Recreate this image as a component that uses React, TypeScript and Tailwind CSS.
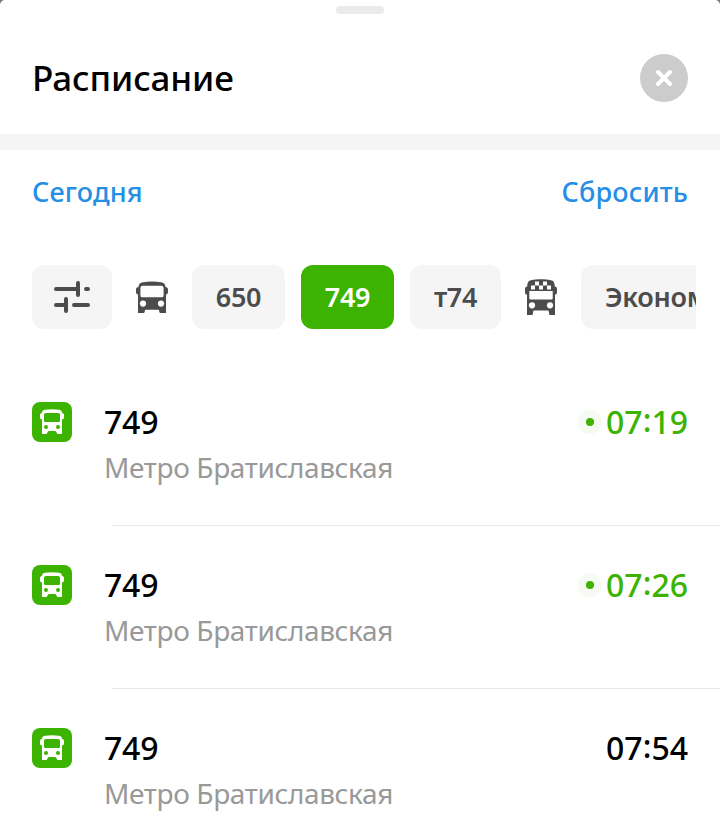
import React from "react";

function BusIcon() {
  return (
    <svg className="h-[33px] w-8 shrink-0" viewBox="0 0 32 33" fill="#4c4c4c">
      <path fillRule="evenodd" d="M2.5 6C2.7 3 4 1.7 7 1.2C13 .1 19 .1 25 1.2C28 1.7 29.3 3 29.5 6C31 6 32 7 32 8.5V11C32 12.5 31.2 13.2 30 13.5V32H23.8L22.8 28.7H9.2L8.2 32H2V13.5C.8 13.2 0 12.5 0 11V8.5C0 7 1 6 2.5 6ZM7 4.8C5.5 4.8 4.5 5.6 4.4 7V14.5C4.4 15.7 5.2 16.3 6.3 16.3H25.7C26.8 16.3 27.6 15.7 27.6 14.5V7C27.5 5.6 26.5 4.8 25 4.8Z" />
      <circle cx="7" cy="22.6" r="3.1" fill="#fff" />
      <circle cx="25" cy="22.6" r="3.1" fill="#fff" />
    </svg>
  );
}

function ExpressBusIcon() {
  return (
    <svg className="h-9 w-8 shrink-0" viewBox="0 0 32 36" fill="#4c4c4c">
      <path fillRule="evenodd" d="M2.2 7.5C2.4 3 3.5 1.8 6 1.2C12 0 20 0 26 1.2C28.5 1.8 29.6 3 29.8 7.5C31.2 7.8 32 8.6 32 10V13.2C32 14.6 31.2 15.4 30 15.6V36H24.5L23.5 31.5H8.5L7.5 36H2V15.6C.8 15.4 0 14.6 0 13.2V10C0 8.6 .8 7.8 2.2 7.5ZM4.3 12V19C4.3 20 4.8 20.5 5.8 20.5H26.2C27.2 20.5 27.7 20 27.7 19V12Z" />
      <path fill="#fff" d="M10 2.5h4v4h-4zM18 2.5h4v4h-4zM6 6.5h4v4H6zM14 6.5h4v4h-4zM22 6.5h4v4h-4z" />
      <circle cx="7" cy="26.3" r="3.1" fill="#fff" />
      <circle cx="25" cy="26.3" r="3.1" fill="#fff" />
    </svg>
  );
}

function FilterIcon() {
  return (
    <svg className="h-8 w-9" viewBox="0 0 36 32" fill="none" stroke="#4c4c4c" strokeWidth="4" strokeLinecap="round">
      <path d="M2 8H23M24 2V14M32 8H34M2 24H11M12 18V30M20 24H34" />
    </svg>
  );
}

function RouteBadge() {
  return (
    <div className="mt-px flex size-10 shrink-0 items-center justify-center rounded-lg bg-[#3bb300]">
      <svg className="-mt-px h-[25px] w-6" viewBox="0 0 24 25" fill="#fff">
        <path fillRule="evenodd" d="M1.8 4C2.2 1.7 3.3 1 5 .7C10 0 14 0 19 .7C20.7 1 21.8 1.7 22.2 4C23.4 4.3 24 5 24 6V8.5C24 9.5 23.3 10.3 22 10.5V25H17.5L15.5 22H8.5L6.5 25H2V10.5C.7 10.3 0 9.5 0 8.5V6C0 5 .6 4.3 1.8 4ZM6 4C4.800 4 4 4.800 4 6V11.500C4 12.500 4.500 13 5.500 13H18.500C19.500 13 20 12.500 20 11.500V6C20 4.800 19.200 4 18 4Z" />
        <circle cx="6" cy="18" r="2" fill="#3bb300" />
        <circle cx="18" cy="18" r="2" fill="#3bb300" />
      </svg>
    </div>
  );
}

function Departure({ time, live }: { time: string; live?: boolean }) {
  const [hours, minutes] = time.split(":");
  return (
    <div className="mt-px flex h-10 items-center">
      {live && (
        <span className="mr-1 flex size-6 items-center justify-center rounded-full bg-[#f5fbf2]">
          <span className="size-2 rounded-full bg-[#3bb300]" />
        </span>
      )}
      <span className={live ? "text-[32px] leading-10 font-medium text-[#3bb300]" : "text-[32px] leading-10 font-medium text-black"}>
        {hours}
        <span className="relative -top-[2px]">:</span>
        {minutes}
      </span>
    </div>
  );
}

function RouteRow({ time, live, last }: { time: string; live?: boolean; last?: boolean }) {
  return (
    <div className="h-[163px] shrink-0">
      <div className="flex h-[162px] px-8 pt-[38px]">
        <RouteBadge />
        <div className="ml-8 flex-1 pt-px">
          <div className="text-[32px] leading-10 font-medium tracking-[-0.2px]">749</div>
          <div className="mt-[5px] text-[28px] leading-10 tracking-[-0.36px] whitespace-nowrap text-[#999]">Метро Братиславская</div>
        </div>
        <Departure time={time} live={live} />
      </div>
      {!last && <div className="ml-28 h-px bg-[#e8e8e8]" />}
    </div>
  );
}

const chip = "flex h-16 shrink-0 items-center justify-center rounded-xl text-[27px] font-semibold tracking-[-0.3px] whitespace-nowrap";

export default function App() {
  return (
    <div className="h-[822px] w-[720px] overflow-hidden bg-[#777] font-['Noto_Sans',sans-serif] text-black">
      <div className="flex h-full flex-col rounded-t-[5px] bg-white">
        <div className="flex h-[54px] shrink-0 justify-center pt-1.5">
          <div className="h-2 w-12 rounded-full bg-[#ebebeb]" />
        </div>
        <header className="flex h-20 shrink-0 items-start justify-between px-8">
          <h1 className="text-[35px] leading-12 font-medium tracking-[-0.15px]">Расписание</h1>
          <button className="flex size-12 items-center justify-center rounded-full bg-[#ccc]">
            <svg className="size-4" viewBox="0 0 16 16" fill="none" stroke="#fff" strokeWidth="4" strokeLinecap="round">
              <path d="M2 2L14 14M14 2L2 14" />
            </svg>
          </button>
        </header>
        <div className="h-4 shrink-0 bg-[#f5f5f5]" />
        <div className="flex h-[115px] shrink-0 justify-between px-8 pt-[22px] text-[27px] leading-10 font-medium tracking-[0.15px] text-[#258ee6]">
          <span>Сегодня</span>
          <span>Сбросить</span>
        </div>
        <div className="mr-6 ml-8 flex h-16 shrink-0 overflow-hidden">
          <div className={`${chip} w-20 bg-[#f5f5f5]`}><FilterIcon /></div>
          <div className="flex w-20 shrink-0 items-center justify-center"><BusIcon /></div>
          <div className={`${chip} w-[93px] bg-[#f5f5f5] text-[#4c4c4c]`}>650</div>
          <div className={`${chip} ml-4 w-[93px] bg-[#3bb300] text-white`}>749</div>
          <div className={`${chip} ml-4 w-[91px] bg-[#f5f5f5] text-[#4c4c4c]`}>т74</div>
          <div className="flex w-20 shrink-0 items-center justify-center"><ExpressBusIcon /></div>
          <div className={`${chip} bg-[#f5f5f5] px-6 text-[#4c4c4c]`}>Эконом</div>
        </div>
        <div className="mt-[34px] flex flex-col">
          <RouteRow time="07:19" live />
          <RouteRow time="07:26" live />
          <RouteRow time="07:54" last />
        </div>
      </div>
    </div>
  );
}
